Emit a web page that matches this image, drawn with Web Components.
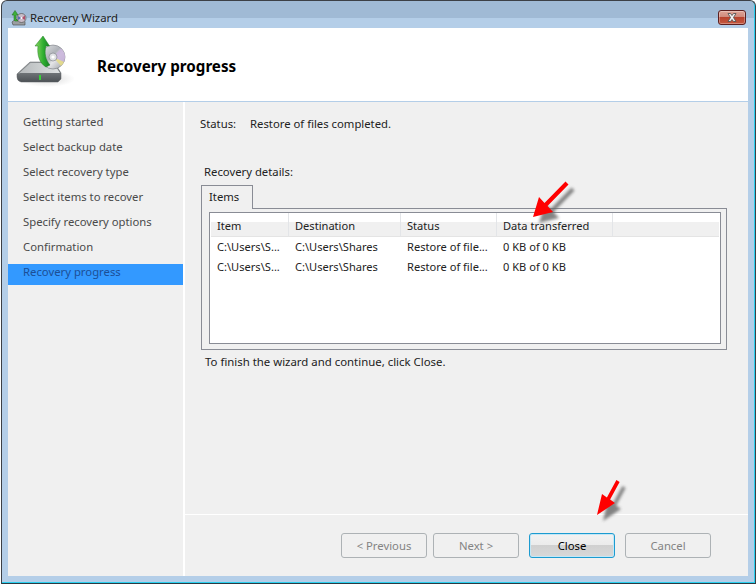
<!DOCTYPE html>
<html><head><meta charset="utf-8">
<style>
html,body{margin:0;padding:0;background:#fff;width:756px;height:584px;overflow:hidden}
body{font:11.3px/16px "Noto Sans",sans-serif;color:#222}
</style></head><body>
<wizard-window>
  <wiz-titlebar slot="title">Recovery Wizard</wiz-titlebar>
  <wiz-header slot="header">Recovery progress</wiz-header>
  <wiz-nav slot="nav">
    <wiz-nav-item>Getting started</wiz-nav-item>
    <wiz-nav-item>Select backup date</wiz-nav-item>
    <wiz-nav-item>Select recovery type</wiz-nav-item>
    <wiz-nav-item>Select items to recover</wiz-nav-item>
    <wiz-nav-item>Specify recovery options</wiz-nav-item>
    <wiz-nav-item>Confirmation</wiz-nav-item>
    <wiz-nav-item selected>Recovery progress</wiz-nav-item>
  </wiz-nav>
  <wiz-main slot="main">
    <wiz-status label="Status:">Restore of files completed.</wiz-status>
    <wiz-tabs label="Recovery details:" tab="Items" hint="To finish the wizard and continue, click Close.">
      <wiz-list></wiz-list>
    </wiz-tabs>
  </wiz-main>
  <wiz-footer slot="footer">
    <wiz-button disabled>&lt; Previous</wiz-button>
    <wiz-button disabled>Next &gt;</wiz-button>
    <wiz-button primary>Close</wiz-button>
    <wiz-button disabled>Cancel</wiz-button>
  </wiz-footer>
  <red-arrow slot="overlay" style="left:523px;top:177px" points="8,39 14,19 19.500,25 40.500,3.500 43.500,6.500 22.500,28 28,34"></red-arrow>
  <red-arrow slot="overlay" style="left:588px;top:475px" points="7,39 12,18 16.900,21.600 26.400,4.100 29.600,5.900 20.100,23.400 25,27"></red-arrow>
</wizard-window>
<script>
function def(name,html){
  customElements.define(name,class extends HTMLElement{
    connectedCallback(){
      if(this.shadowRoot)return;
      const r=this.attachShadow({mode:'open'});
      r.innerHTML=typeof html==='function'?html(this):html;
    }
  });
}
def('wizard-window',`<style>
:host{display:flex;flex-direction:column;box-sizing:border-box;width:755px;height:584px;position:relative;margin-left:1px;
 background:linear-gradient(#a0bad5 0,#a0bad5 17px,#b4cee8 17px);
 border:1px solid #3c4046;border-bottom:1px solid #2a3a42;border-radius:6px 6px 0 0;
 box-shadow:inset -1px -1px 0 #2bd0f0;padding:0 7px 7px 6px}
.body{flex:1;display:flex;flex-direction:column;min-height:0}
.cols{flex:1;display:flex;min-height:0;background:#fff}
.right{flex:1;display:flex;flex-direction:column;margin-left:2px;min-width:0;background:#f0f0f0}
</style>
<slot name="title"></slot>
<div class="body"><slot name="header"></slot>
<div class="cols"><slot name="nav"></slot><div class="right"><slot name="main"></slot><slot name="footer"></slot></div></div></div>
<slot name="overlay"></slot>`);
def('wiz-titlebar',`<style>
:host{display:flex;align-items:center;height:27px;flex:none;position:relative;font-size:11.4px;color:#222}
svg{margin:6px 3px 0 3px;flex:none}
span{margin-top:7px}
.x{position:absolute;right:2px;top:9px;width:28px;height:15px;box-sizing:border-box;border:1px solid #5c1f1f;border-radius:3px;
 background:linear-gradient(#dfa496 0,#cf8a7c 45%,#b8432e 50%,#c4583f 100%);box-shadow:inset 0 0 0 1px rgba(255,255,255,.3);display:flex;align-items:center;justify-content:center}
.x svg{margin:0}
</style>
<svg width="16" height="16" viewBox="0 0 16 16"><path d="M1 12L4 9.500H13L14 12V15H2Z" fill="#9a9ea2" stroke="#444" stroke-width=".6"/><circle cx="10.500" cy="8" r="4.500" fill="#c9bcc8" stroke="#555" stroke-width=".7"/><path d="M10.500 8L14 5.500V10Z" fill="#b0506a"/><path d="M10.500 8L7 6V10Z" fill="#5a6fb0"/><circle cx="10.500" cy="8" r="1" fill="#fff"/><path d="M3 10V5H1L4 0.500 7 5H5V9l2 2H4Z" fill="#3fb03a" stroke="#1c6a1c" stroke-width=".5"/></svg>
<span><slot></slot></span>
<div class="x"><svg width="14" height="11" viewBox="0 0 14 11"><path d="M3 1.500h2.500L7 3.500l1.500-2H11L8.500 5.500 11 9.500H8.500L7 7.500l-1.500 2H3l2.500-4z" fill="#f2f2f2" stroke="#555" stroke-width=".9"/></svg></div>`);
def('wiz-header',`<style>
:host{display:flex;align-items:center;height:73px;flex:none;background:#fff;margin-bottom:1px}
svg{flex:none;margin-left:6px;width:60px;height:60px}
b{font-size:15.2px;font-weight:700;color:#000;margin-left:23px;margin-top:3px}
</style>
<svg viewBox="0 0 60 60">
<defs>
<linearGradient id="d" x1="0" y1="0" x2="1" y2="1"><stop offset="0" stop-color="#e6e8e8"/><stop offset=".45" stop-color="#aeb2b8"/><stop offset=".6" stop-color="#e6e6e8"/><stop offset="1" stop-color="#969aa0"/></linearGradient>
<linearGradient id="h" x1="0" y1="0" x2="1" y2="0"><stop offset="0" stop-color="#b4b8ba"/><stop offset="1" stop-color="#dfe2e2"/></linearGradient>
<linearGradient id="f" x1="0" y1="0" x2="0" y2="1"><stop offset="0" stop-color="#9a9ea0"/><stop offset="1" stop-color="#4c5155"/></linearGradient>
<linearGradient id="g" x1="0" y1="0" x2="1" y2="0"><stop offset="0" stop-color="#8cd860"/><stop offset=".55" stop-color="#2fae30"/><stop offset="1" stop-color="#167f24"/></linearGradient>
<radialGradient id="sh"><stop offset="0" stop-color="#bbb" stop-opacity=".55"/><stop offset="1" stop-color="#bbb" stop-opacity="0"/></radialGradient>
</defs>
<ellipse cx="33" cy="44" rx="28" ry="8" fill="url(#sh)"/>
<path d="M3 39L16 27H40L47 38V44L44 47H7Q3 46 3 42Z" fill="url(#f)" stroke="#5e6367" stroke-width=".5"/>
<path d="M4 39L16.500 28H39.500L46 38H6Z" fill="url(#h)"/>
<rect x="25" y="40" width="2" height="5" fill="#35d035"/>
<circle cx="39" cy="22" r="12" fill="url(#d)" stroke="#777b81" stroke-width=".6"/>
<path d="M39 22L47 13.500A12 12 0 0 1 50 27Z" fill="#c9b4dc" opacity=".85"/>
<path d="M39 22L50 27A12 12 0 0 1 47 31Z" fill="#e5dc88" opacity=".9"/>
<circle cx="39" cy="22" r="4" fill="#dfe1e4" stroke="#777b81" stroke-width=".6"/><circle cx="39" cy="22" r="1.600" fill="#fff"/>
<path d="M24 11C23 19 25 28 32 32L36 30C31.500 25 30 18 32 11H35.500L29 1L21 11Z" fill="url(#g)" stroke="#1f7a25" stroke-width=".5"/>
</svg><b><slot></slot></b>`);
def('wiz-nav',`<style>
:host{display:flex;flex-direction:column;width:175px;flex:none;background:#f0f0f0;padding-top:8px;box-sizing:border-box}
</style><slot></slot>`);
def('wiz-nav-item',`<style>
:host{display:flex;align-items:center;height:25px;box-sizing:border-box;flex:none;padding:0 0 1px 15px;color:#4a4a4a}
:host([selected]){background:#3399ff;color:#1c4f96;height:21px;margin-top:4px;padding-bottom:5px}
</style><slot></slot>`);
def('wiz-main',`<style>
:host{flex:1;display:flex;flex-direction:column;min-height:0;padding:14px 21px 0 15px;box-sizing:border-box}
</style><slot></slot>`);
def('wiz-status',el=>`<style>
:host{display:grid;grid-template-columns:50px auto;justify-content:start;height:16px;flex:none}
</style><span>${el.getAttribute('label')}</span><span><slot></slot></span>`);
def('wiz-tabs',el=>`<style>
:host{display:block;margin:32px 0 0 1px}
.lab{height:16px;padding-left:3px}
.strip{display:flex;margin-top:5px;height:24px;position:relative;z-index:1}
.tab{width:52px;height:24px;box-sizing:border-box;border:1px solid #898c95;border-bottom:0;background:#f0f0f0;padding:2px 0 0 7px;line-height:18px}
.panel{height:142px;box-sizing:border-box;border:1px solid #898c95;margin-top:-1px;padding:3px 5px 5px 7px;display:flex}
.hint{padding-left:4px;margin-top:4px;height:16px;font-size:11.4px}
</style>
<div class="lab">${el.getAttribute('label')}</div>
<div class="strip"><div class="tab">${el.getAttribute('tab')}</div></div>
<div class="panel"><slot></slot></div>
<div class="hint">${el.getAttribute('hint')}</div>`);
def('wiz-list',()=>{
 const cols=[['Item',78],['Destination',112],['Status',96],['Data transferred',116]];
 const row=['C:\\Users\\S...','C:\\Users\\Shares','Restore of file...','0 KB of 0 KB'];
 const r=`<div class="row">${row.map((t,i)=>`<div class="c" style="width:${cols[i][1]}px">${t}</div>`).join('')}</div>`;
 return `<style>
:host{flex:1;display:block;border:1px solid #898c95;background:#fff;padding:0 1px;min-width:0;font-size:11.1px}
.head{display:flex;height:23px;background:linear-gradient(#fff 0,#fff 9px,#f0f0f0 9px);border-bottom:1px solid #e4e4e4}
.h{box-sizing:border-box;padding:5px 0 0 6px;line-height:16px;border-right:1px solid #e3e5e8;height:23px}
.row{display:flex;height:20px;line-height:20px}
.c{box-sizing:border-box;padding-left:6px;white-space:nowrap;overflow:hidden}
</style><div class="head">${cols.map(c=>`<div class="h" style="width:${c[1]}px">${c[0]}</div>`).join('')}</div><div class="rows">${r}${r}</div>`;
});
def('wiz-footer',`<style>
:host{display:flex;justify-content:flex-end;gap:6px;align-items:flex-start;height:62px;flex:none;box-sizing:border-box;border-top:1px solid #fff;padding:18px 37px 0 0}
::slotted(wiz-button:nth-child(3)),::slotted(wiz-button:nth-child(4)){margin-left:4px}
</style><slot></slot>`);
def('wiz-button',`<style>
:host{display:flex;align-items:center;justify-content:center;width:86px;height:25px;box-sizing:border-box;border:1px solid #1c9bd0;border-radius:3px;background:linear-gradient(#f2f2f2 0,#ebebeb 50%,#d0d0d0 50%,#d8d8d8 100%);color:#000;box-shadow:inset 0 0 0 1px #c4e7f6}
:host([disabled]){border:1px solid #adb2b5;background:#f0f0f0;color:#838383;box-shadow:none}
</style><slot></slot>`);
def('red-arrow',el=>`<style>
:host{position:absolute;display:block;width:60px;height:60px;pointer-events:none}
svg{overflow:visible;display:block}
</style><svg width="60" height="60"><defs><filter id="b" x="-40%" y="-40%" width="180%" height="180%"><feGaussianBlur stdDeviation="1.6"/></filter></defs>
<polygon points="${el.getAttribute('points')}" fill="#666" opacity=".8" transform="translate(6 6)" filter="url(#b)"/>
<polygon points="${el.getAttribute('points')}" fill="#f00"/></svg>`);
</script>
</body></html>
